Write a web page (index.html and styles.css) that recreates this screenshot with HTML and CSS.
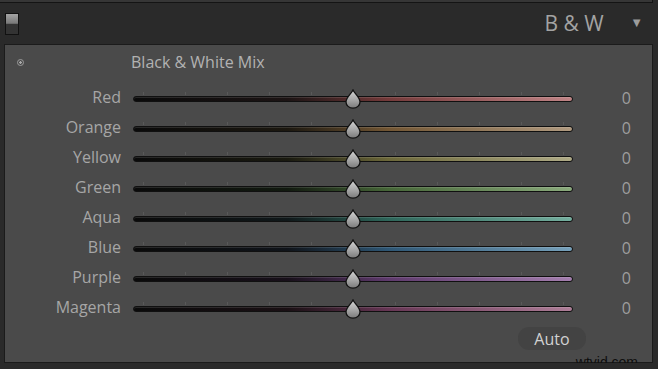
FILE: index.html
```html
<!DOCTYPE html>
<html lang="en">
<head>
  <meta charset="UTF-8" />
  <title>B &amp; W panel</title>
  <link rel="stylesheet" href="styles.css">
</head>
<body>
  <div class="top-edge"></div>

  <div class="header">
    <div class="switch"></div>
    <div class="panel-title">B &amp; W</div>
    <div class="collapse">&#9660;</div>
  </div>

  <div class="panel">
    <div class="mix-head">
      <span class="target"></span>
      <span class="mix-title">Black &amp; White Mix</span>
    </div>

    <div class="rows">
      <div class="label">Red</div>
      <div class="slider"><div class="track red"></div><svg class="thumb" viewBox="0 0 16 20"><use href="#drop"/></svg></div>
      <div class="value">0</div>

      <div class="label">Orange</div>
      <div class="slider"><div class="track orange"></div><svg class="thumb" viewBox="0 0 16 20"><use href="#drop"/></svg></div>
      <div class="value">0</div>

      <div class="label">Yellow</div>
      <div class="slider"><div class="track yellow"></div><svg class="thumb" viewBox="0 0 16 20"><use href="#drop"/></svg></div>
      <div class="value">0</div>

      <div class="label">Green</div>
      <div class="slider"><div class="track green"></div><svg class="thumb" viewBox="0 0 16 20"><use href="#drop"/></svg></div>
      <div class="value">0</div>

      <div class="label">Aqua</div>
      <div class="slider"><div class="track aqua"></div><svg class="thumb" viewBox="0 0 16 20"><use href="#drop"/></svg></div>
      <div class="value">0</div>

      <div class="label">Blue</div>
      <div class="slider"><div class="track blue"></div><svg class="thumb" viewBox="0 0 16 20"><use href="#drop"/></svg></div>
      <div class="value">0</div>

      <div class="label">Purple</div>
      <div class="slider"><div class="track purple"></div><svg class="thumb" viewBox="0 0 16 20"><use href="#drop"/></svg></div>
      <div class="value">0</div>

      <div class="label">Magenta</div>
      <div class="slider"><div class="track magenta"></div><svg class="thumb" viewBox="0 0 16 20"><use href="#drop"/></svg></div>
      <div class="value">0</div>
    </div>

    <div class="actions">
      <button class="auto">Auto</button>
    </div>

    <div class="watermark">wtvid.com</div>
  </div>

  <!-- shared slider thumb -->
  <svg width="0" height="0" class="defs">
    <defs>
      <linearGradient id="dropFill" x1="0" y1="0" x2="0" y2="1">
        <stop offset="0" stop-color="#d4d4d4"/>
        <stop offset="0.55" stop-color="#a6a6a6"/>
        <stop offset="1" stop-color="#7a7a7a"/>
      </linearGradient>
      <path id="drop" d="M8 1 C9.5 4.5 15 8.5 15 13 A7 6.2 0 0 1 1 13 C1 8.5 6.5 4.5 8 1 Z" fill="url(#dropFill)" stroke="#111" stroke-width="1.3"/>
    </defs>
  </svg>
</body>
</html>
```

FILE: styles.css
```css
body {
  margin: 0;
  background: #2a2a2a;
  font-family: "Open Sans", "Noto Sans", sans-serif;
  color: #a9a9a9;
  overflow: hidden;
}

.top-edge {
  width: 652px;
  height: 2px;
  background: #363636;
  border-bottom: 1px solid #141414;
  border-right: 1px solid #141414;
}

.header {
  height: 41px;
  display: flex;
  align-items: center;
  padding: 0 0 0 5px;
}

.switch {
  width: 12px;
  height: 20px;
  border: 1px solid #111;
  background: linear-gradient(to bottom, #a4a4a4 0%, #7a7a7a 45%, #5a5a5a 50%, #333 52%, #333 100%);
}

.panel-title {
  margin-left: auto;
  margin-top: -2px;
  font-size: 21px;
  letter-spacing: 0.5px;
  word-spacing: -1px;
  color: #a3a3a3;
}

.collapse {
  font-size: 13px;
  color: #9c9c9c;
  margin: -3px 15px 0 26px;
}

.panel {
  position: relative;
  width: 647px;
  height: 317px;
  margin-left: 4px;
  background: #4a4a4a;
  border: 1px solid #1b1b1b;
}

.mix-head {
  height: 39px;
  display: flex;
  align-items: center;
  position: relative;
}

.target {
  position: absolute;
  left: 12px;
  top: 14px;
  width: 5px;
  height: 5px;
  border: 1px solid #9a9a9a;
  border-radius: 50%;
  background: radial-gradient(circle, #aaa 0 1px, transparent 1.5px);
}

.mix-title {
  margin-left: 126px;
  margin-top: -6px;
  font-size: 16px;
  color: #b2b2b2;
}

.rows {
  display: grid;
  grid-template-columns: 116px 440px 1fr;
  grid-auto-rows: 30px;
  column-gap: 12px;
  align-items: center;
}

.label {
  text-align: right;
  font-size: 16px;
  color: #a6a6a6;
  margin-top: -4px;
}

.slider {
  position: relative;
  height: 30px;
}

.slider::before {
  content: "";
  position: absolute;
  left: 10px;
  top: 8px;
  width: 421px;
  height: 3px;
  background: repeating-linear-gradient(to right, #595959 0 1px, transparent 1px 42px);
}

.track {
  position: absolute;
  left: 0;
  right: 0;
  top: 12px;
  height: 4px;
  border: 1px solid #101010;
  border-radius: 3px;
  box-shadow: inset 0 1px 0 rgba(255,255,255,0.12);
}

.thumb {
  position: absolute;
  left: 212px;
  top: 5px;
  width: 16px;
  height: 20px;
}

.red     { background: linear-gradient(to right, #0a0a0a 0%, #1c1414 35%, #743a3a 58%, #c08486 100%); }
.orange  { background: linear-gradient(to right, #0a0a0a 0%, #1c1810 35%, #725634 58%, #b09a80 100%); }
.yellow  { background: linear-gradient(to right, #0a0a0a 0%, #1a1a10 35%, #6c683a 58%, #aeaa86 100%); }
.green   { background: linear-gradient(to right, #0a0a0a 0%, #121a10 35%, #466638 58%, #8aaa7c 100%); }
.aqua    { background: linear-gradient(to right, #0a0a0a 0%, #10181a 35%, #2e665a 58%, #74ae9e 100%); }
.blue    { background: linear-gradient(to right, #0a0a0a 0%, #10141a 35%, #2e5674 58%, #76a0ba 100%); }
.purple  { background: linear-gradient(to right, #0a0a0a 0%, #18101a 35%, #5e3a6c 58%, #a47eae 100%); }
.magenta { background: linear-gradient(to right, #0a0a0a 0%, #1a1014 35%, #663654 58%, #ae7e98 100%); }

.value {
  font-size: 16px;
  color: #9e9e9e;
  text-align: right;
  padding-right: 21px;
  margin-top: -2px;
}

.actions {
  display: flex;
  justify-content: flex-end;
  padding: 3px 66px 0 0;
}

.auto {
  width: 68px;
  height: 23px;
  border: none;
  border-radius: 11px;
  background: #434343;
  color: #d2d2d2;
  font-family: "Open Sans", "Noto Sans", sans-serif;
  font-size: 16px;
  line-height: 22px;
  padding: 0;
}

.watermark {
  position: absolute;
  right: 14px;
  bottom: -8px;
  font-family: "Liberation Sans", sans-serif;
  font-size: 14px;
  color: #0e0e0e;
}

.defs {
  position: absolute;
}
```
